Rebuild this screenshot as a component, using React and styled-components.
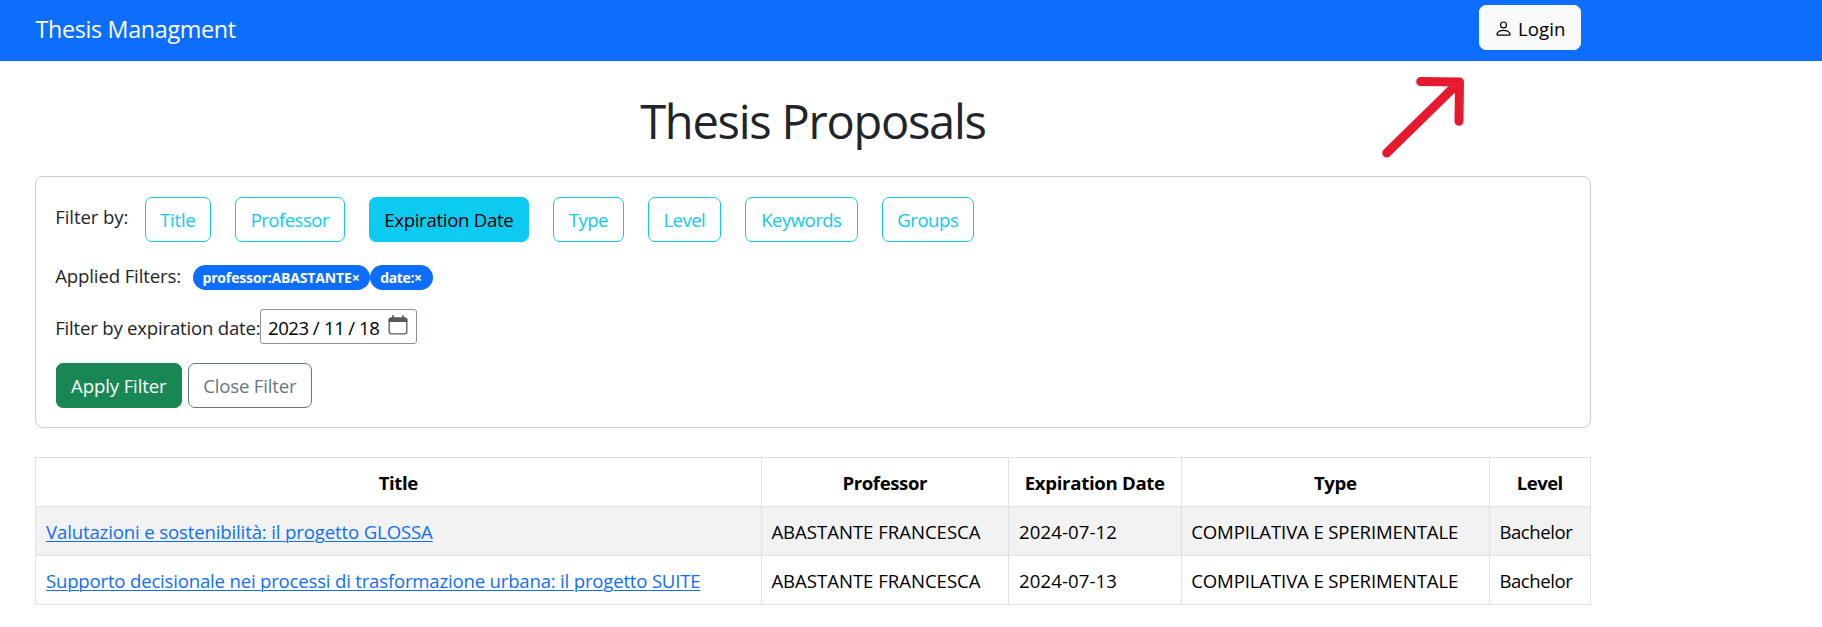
import React from 'react';
import styled, { createGlobalStyle } from 'styled-components';

const GlobalStyle = createGlobalStyle`
  *, *::before, *::after { box-sizing: border-box; }
  body {
    margin: 0;
    background: #fff;
    color: #212529;
    font-family: "Open Sans", "Noto Sans", sans-serif;
    font-size: 18.6px;
    line-height: 29px;
    overflow: hidden;
  }
`;

const Text = styled.span`
  letter-spacing: ${(p) => p.$track || 0}px;
  white-space: nowrap;
`;

const Navbar = styled.header`
  height: 61px;
  background: #0d6efd;
`;

const NavInner = styled.div`
  display: flex;
  justify-content: space-between;
  align-items: flex-start;
  width: 1581px;
  padding: 5px 0 0 35.5px;
`;

const Brand = styled.div`
  padding-top: 6px;
  color: #fff;
  font-size: 23.3px;
  line-height: 36px;
`;

const Button = styled.button`
  display: flex;
  align-items: center;
  justify-content: center;
  flex: none;
  width: ${(p) => p.$width}px;
  height: 45px;
  padding: ${(p) => p.$drop || 0}px 0.4px 0 0;
  border: 1px solid ${(p) => p.$border || p.$bg};
  border-radius: 7px;
  background: ${(p) => p.$bg || 'transparent'};
  color: ${(p) => p.$color};
  font: inherit;
`;

const PersonIcon = styled.svg`
  width: 19px;
  height: 19px;
  margin: 0 5px 1px 0;
`;

const Main = styled.main`
  position: relative;
  width: 1556px;
  margin-left: 35px;
  padding-top: 31px;
`;

const Heading = styled.h1`
  margin: 0 0 26px;
  text-align: center;
  font-size: 47px;
  font-weight: 400;
  line-height: 58px;
`;

const Arrow = styled.svg`
  position: absolute;
  left: 1345px;
  top: 14px;
  width: 90px;
  height: 90px;
`;

const Panel = styled.section`
  height: 252px;
  padding: 20px;
  border: 1px solid #ccc;
  border-radius: 8px;
`;

const Row = styled.div`
  display: flex;
  align-items: flex-start;
  gap: ${(p) => p.$gap || 0}px;
  height: ${(p) => p.$height}px;
  margin-bottom: ${(p) => p.$after || 0}px;
`;

const Label = styled.div`
  flex: none;
  width: ${(p) => p.$width}px;
  padding-top: ${(p) => p.$drop || 0}px;
  text-indent: -0.8px;
`;

const Badge = styled.span`
  display: flex;
  align-items: center;
  justify-content: center;
  width: ${(p) => p.$width}px;
  height: 25px;
  margin-top: 4px;
  padding-right: 1px;
  border-radius: 13px;
  background: #0d6efd;
  color: #fff;
  font-size: 14px;
  font-weight: 700;
  line-height: 25px;
`;

const DateField = styled.div`
  display: flex;
  align-items: center;
  width: 157px;
  height: 35px;
  padding: 0 8px 0 7px;
  border: 1px solid #8f8f9d;
  border-radius: 3px;
  color: #000;
`;

const DatePart = styled.span`
  width: ${(p) => p.$width}px;
  padding-top: 2px;
  letter-spacing: -0.45px;
  text-align: ${(p) => p.$align || 'left'};
`;

const CalendarIcon = styled.svg`
  width: 20px;
  height: 20px;
  margin: 0 0 3px auto;
`;

const Table = styled.table`
  width: 1556px;
  margin-top: 29px;
  border-collapse: collapse;
  table-layout: fixed;
  color: #000;
`;

const Tr = styled.tr`
  height: 49px;
  background: ${(p) => (p.$striped ? '#f2f2f2' : '#fff')};
`;

const Th = styled.th`
  width: ${(p) => p.$width}px;
  padding: 1px 0.5px 0 0;
  border: 1px solid #dee2e6;
  text-align: center;
  font-weight: 700;
`;

const Td = styled.td`
  padding: 1px 0 0 ${(p) => p.$inset || 10}px;
  border: 1px solid #dee2e6;
`;

const Link = styled.a`
  color: #0d6efd;
  text-decoration: underline;
  text-decoration-thickness: 1px;
  text-underline-offset: 2px;
  text-decoration-skip-ink: auto;
`;

const filters = [
  { name: 'Title', width: 66, track: -0.234 },
  { name: 'Professor', width: 110, track: -0.54 },
  { name: 'Expiration Date', width: 160, track: -0.295, active: true },
  { name: 'Type', width: 71, track: -0.54 },
  { name: 'Level', width: 73, track: -0.57 },
  { name: 'Keywords', width: 113, track: -0.534 },
  { name: 'Groups', width: 92, track: -0.503 },
];

const columns = [
  { name: 'Title', width: 726, track: -0.458 },
  { name: 'Professor', width: 247, track: -0.392 },
  { name: 'Expiration Date', width: 173, track: -0.307 },
  { name: 'Type', width: 308, track: -0.35 },
  { name: 'Level', width: 101, track: -0.58 },
];

const proposals = [
  { title: 'Valutazioni e sostenibilità: il progetto GLOSSA', track: -0.145, date: '2024-07-12' },
  {
    title: 'Supporto decisionale nei processi di trasformazione urbana: il progetto SUITE',
    track: -0.2,
    date: '2024-07-13',
  },
];

export default function App() {
  return (
    <>
      <GlobalStyle />
      <Navbar>
        <NavInner>
          <Brand>
            <Text $track={-0.32}>Thesis Managment</Text>
          </Brand>
          <Button $width={102} $drop={2} $bg="#f8f9fa" $color="#000">
            <PersonIcon viewBox="0 0 16 16" fill="currentColor">
              <path d="M8 8a3 3 0 1 0 0-6 3 3 0 0 0 0 6m2-3a2 2 0 1 1-4 0 2 2 0 0 1 4 0m4 8c0 1-1 1-1 1H3s-1 0-1-1 1-4 6-4 6 3 6 4m-1-.004c-.001-.246-.154-.986-.832-1.664C11.516 10.68 10.289 10 8 10s-3.516.68-4.168 1.332c-.678.678-.83 1.418-.832 1.664z" />
            </PersonIcon>
            <Text $track={0.06}>Login</Text>
          </Button>
        </NavInner>
      </Navbar>
      <Main>
        <Heading>
          <Text $track={-1.25}>Thesis Proposals</Text>
        </Heading>
        <Panel>
          <Row $height={45} $after={19}>
            <Label $width={89} $drop={5}>
              <Text $track={-0.1}>Filter by:</Text>
            </Label>
            <Row $height={45} $gap={24}>
              {filters.map((f) => (
                <Button
                  key={f.name}
                  $width={f.width}
                  $border="#0dcaf0"
                  $bg={f.active ? '#0dcaf0' : undefined}
                  $color={f.active ? '#000' : '#0dcaf0'}
                >
                  <Text $track={f.track}>{f.name}</Text>
                </Button>
              ))}
            </Row>
          </Row>
          <Row $height={29} $after={19}>
            <Label $width={137}>
              <Text $track={-0.14}>Applied Filters:</Text>
            </Label>
            <Badge $width={177}>
              <Text $track={-0.145}>professor:ABASTANTE×</Text>
            </Badge>
            <Badge $width={63}>
              <Text $track={-0.4}>date:×</Text>
            </Badge>
          </Row>
          <Row $height={35} $after={19}>
            <Label $width={204} $drop={4}>
              <Text $track={-0.21}>Filter by expiration date:</Text>
            </Label>
            <DateField>
              <DatePart $width={40}>2023</DatePart>
              <DatePart $width={16} $align="center">/</DatePart>
              <DatePart $width={20}>11</DatePart>
              <DatePart $width={15} $align="center">/</DatePart>
              <DatePart $width={20}>18</DatePart>
              <CalendarIcon viewBox="0 0 20 20">
                <rect x="1.2" y="3.2" width="17.6" height="15.6" rx="2" fill="none" stroke="#5b5b5b" strokeWidth="1.3" />
                <path d="M0.6 7V4.5a2 2 0 0 1 2-2h14.8a2 2 0 0 1 2 2V7z" fill="#5b5b5b" />
                <path d="M5 0.2v3M15 0.2v3" stroke="#5b5b5b" strokeWidth="1.8" />
              </CalendarIcon>
            </DateField>
          </Row>
          <Row $height={45} $gap={6}>
            <Button $width={126} $bg="#198754" $color="#fff">
              <Text $track={-0.13}>Apply Filter</Text>
            </Button>
            <Button $width={124} $border="#6c757d" $color="#6c757d">
              <Text $track={-0.185}>Close Filter</Text>
            </Button>
          </Row>
        </Panel>
        <Table>
          <thead>
            <Tr>
              {columns.map((c) => (
                <Th key={c.name} $width={c.width}>
                  <Text $track={c.track}>{c.name}</Text>
                </Th>
              ))}
            </Tr>
          </thead>
          <tbody>
            {proposals.map((p, i) => (
              <Tr key={p.title} $striped={i % 2 === 0}>
                <Td>
                  <Link>
                    <Text $track={p.track}>{p.title}</Text>
                  </Link>
                </Td>
                <Td $inset={9.4}>
                  <Text $track={-0.03}>ABASTANTE FRANCESCA</Text>
                </Td>
                <Td>
                  <Text $track={0.106}>{p.date}</Text>
                </Td>
                <Td $inset={9.2}>
                  <Text $track={-0.135}>COMPILATIVA E SPERIMENTALE</Text>
                </Td>
                <Td $inset={9.4}>
                  <Text $track={-0.43}>Bachelor</Text>
                </Td>
              </Tr>
            ))}
          </tbody>
        </Table>
        <Arrow viewBox="0 0 90 90" fill="none" stroke="#e6192e" strokeWidth="9" strokeLinecap="round" strokeLinejoin="round">
          <path d="M6.7 78 79.3 7M40.7 6.5 79.5 7 79 46.3" />
        </Arrow>
      </Main>
    </>
  );
}
